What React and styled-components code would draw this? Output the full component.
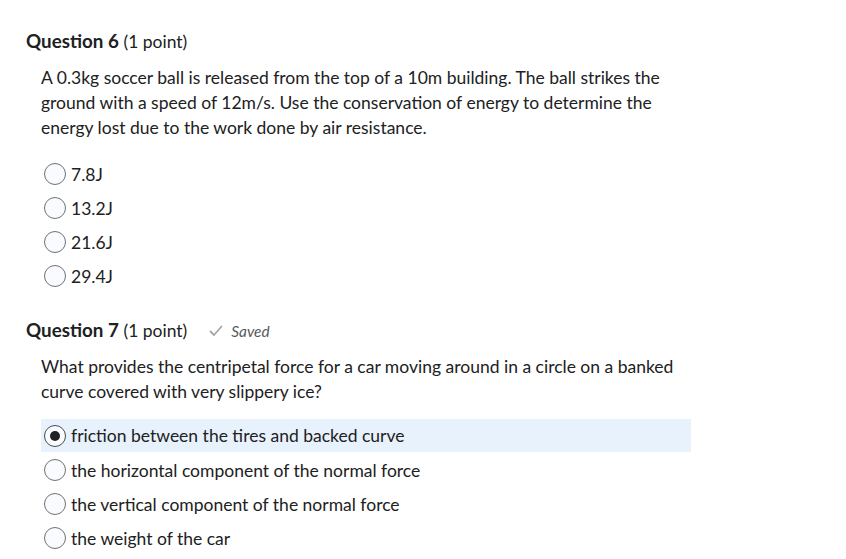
import styled, { createGlobalStyle } from 'styled-components';

const GlobalStyle = createGlobalStyle`
  body {
    margin: 0;
    background: #ffffff;
    font-family: Lato, "Noto Sans", sans-serif;
    color: #202122;
  }
`;

const Page = styled.div`
  padding: 27px 0 0 26px;
  width: 820px;
  box-sizing: border-box;
`;

const Question = styled.section`
  margin-bottom: 23px;
`;

const Header = styled.div`
  display: flex;
  align-items: center;
  height: 27px;
`;

const Title = styled.h2`
  margin: 0;
  font-size: 18.8px;
  font-weight: 700;
  line-height: 27px;
`;

const Points = styled.span`
  font-weight: 400;
  font-size: 17.5px;
`;

const SavedTag = styled.span`
  display: inline-flex;
  align-items: center;
  gap: 8px;
  margin-left: 22px;
  margin-top: 2px;
  font-size: 15.4px;
  font-style: italic;
  color: #565a5c;
`;

const Body = styled.div`
  padding-left: 15px;
  margin-top: 11px;
`;

const Prompt = styled.p`
  margin: 0 0 ${(p) => p.$spacing}px;
  width: 650px;
  font-size: 17.5px;
  line-height: 25px;
`;

const Options = styled.div`
  display: flex;
  flex-direction: column;
  width: 650px;
`;

const Option = styled.label`
  display: flex;
  align-items: center;
  height: ${(p) => (p.$selected ? '33px' : '34px')};
  margin-bottom: ${(p) => (p.$selected ? '1px' : '0')};
  padding-left: 3px;
  box-sizing: border-box;
  font-size: 17.5px;
  background: ${(p) => (p.$selected ? '#e8f2fc' : 'transparent')};
`;

const Radio = styled.span`
  position: relative;
  width: 22px;
  height: 22px;
  border-radius: 50%;
  box-sizing: border-box;
  border: ${(p) => (p.$checked ? '1.5px solid #494c4e' : '1px solid #6e7376')};
  background: #f9fbff;
  margin-right: 5px;
  flex-shrink: 0;

  &::after {
    content: "";
    display: ${(p) => (p.$checked ? 'block' : 'none')};
    position: absolute;
    left: 50%;
    top: 50%;
    width: 10px;
    height: 10px;
    border-radius: 50%;
    background: #202122;
    transform: translate(-50%, -50%);
  }
`;

const CheckIcon = () => (
  <svg width="14" height="12" viewBox="0 0 14 12" fill="none">
    <path d="M1.5 6.5 L5 10 L12.5 1.5" stroke="#a3a8ab" strokeWidth="1.8" strokeLinecap="round" strokeLinejoin="round" />
  </svg>
);

const questions = [
  {
    number: 6,
    prompt:
      'A 0.3kg soccer ball is released from the top of a 10m building. The ball strikes the ground with a speed of 12m/s. Use the conservation of energy to determine the energy lost due to the work done by air resistance.',
    options: ['7.8J', '13.2J', '21.6J', '29.4J'],
    selected: -1,
    saved: false,
  },
  {
    number: 7,
    prompt:
      'What provides the centripetal force for a car moving around in a circle on a banked curve covered with very slippery ice?',
    options: [
      'friction between the tires and backed curve',
      'the horizontal component of the normal force',
      'the vertical component of the normal force',
      'the weight of the car',
    ],
    selected: 0,
    saved: true,
  },
];

const App = () => (
  <>
    <GlobalStyle />
    <Page>
      {questions.map((q) => (
        <Question key={q.number}>
          <Header>
            <Title>
              Question {q.number} <Points>(1 point)</Points>
            </Title>
            {q.saved && (
              <SavedTag>
                <CheckIcon />
                Saved
              </SavedTag>
            )}
          </Header>
          <Body>
            <Prompt $spacing={q.selected >= 0 ? 15 : 17}>{q.prompt}</Prompt>
            <Options>
              {q.options.map((opt, i) => (
                <Option key={opt} $selected={i === q.selected}>
                  <Radio $checked={i === q.selected} />
                  {opt}
                </Option>
              ))}
            </Options>
          </Body>
        </Question>
      ))}
    </Page>
  </>
);

export default App;
